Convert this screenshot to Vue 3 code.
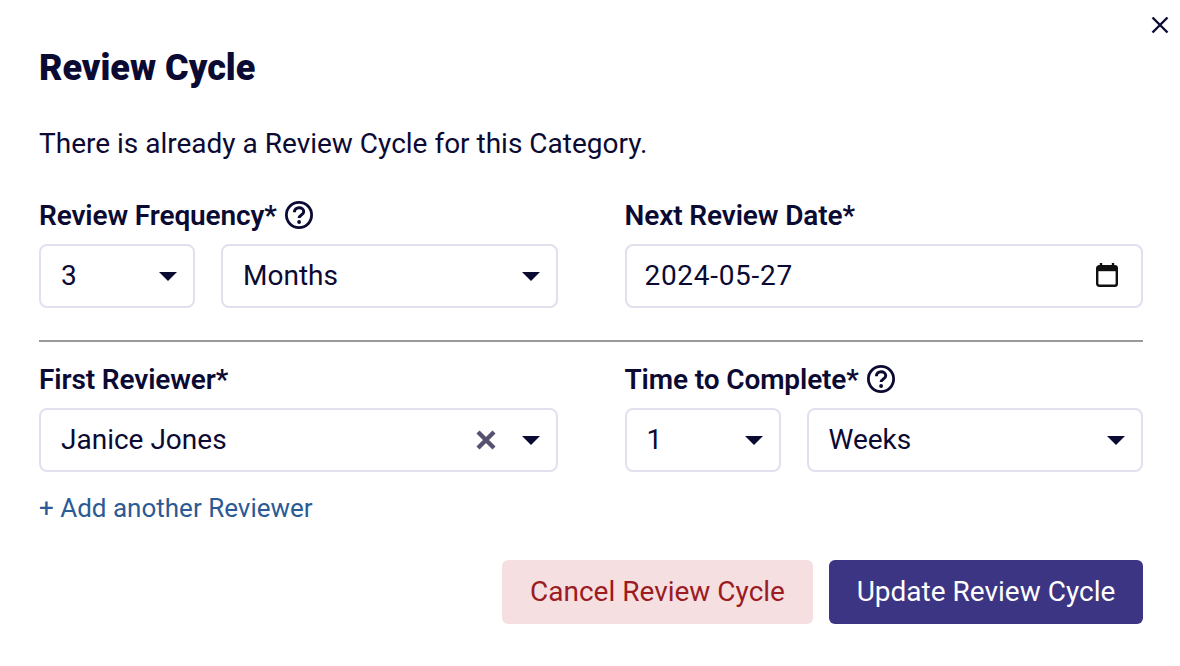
<script setup>
const caret = "M0 0h14L7 7z";
</script>

<template>
  <div class="dialog">
    <button class="close-btn" aria-label="Close">
      <svg width="18" height="18" viewBox="0 0 18 18"><path d="M1.5 1.5l15 15M16.5 1.5l-15 15" stroke="#0b0a33" stroke-width="2.4" fill="none" /></svg>
    </button>
    <h2 class="title">Review Cycle</h2>
    <p class="intro">There is already a Review Cycle for this Category.</p>

    <div class="row">
      <div class="field">
        <div class="label">
          Review Frequency*
          <svg class="help" width="30" height="30" viewBox="0 0 30 30">
            <circle cx="15" cy="15" r="12.6" fill="none" stroke="#0b0a33" stroke-width="2.8" />
            <path d="M10.4 12.2c0-2.7 2.1-4.4 4.7-4.4s4.6 1.6 4.6 3.9c0 3.3-4.6 3.2-4.6 6.4" fill="none" stroke="#0b0a33" stroke-width="3" />
            <circle cx="15.1" cy="22" r="1.9" fill="#0b0a33" />
          </svg>
        </div>
        <div class="pair">
          <div class="select small">
            <span>3</span>
            <svg class="caret" width="18" height="9" viewBox="0 0 14 7"><path :d="caret" /></svg>
          </div>
          <div class="select wide">
            <span>Months</span>
            <svg class="caret" width="18" height="9" viewBox="0 0 14 7"><path :d="caret" /></svg>
          </div>
        </div>
      </div>
      <div class="field">
        <div class="label">Next Review Date*</div>
        <div class="select date">
          <span class="date-value">2024-05-27</span>
          <svg class="calendar" width="24" height="26" viewBox="0 0 24 26">
            <path d="M6 1v4M18 1v4" stroke="#111" stroke-width="2.4" />
            <rect x="2.2" y="4.2" width="19.6" height="19.6" rx="2" fill="none" stroke="#111" stroke-width="2.4" />
            <rect x="2.2" y="4.2" width="19.6" height="5" fill="#111" />
          </svg>
        </div>
      </div>
    </div>

    <hr class="divider" />

    <div class="row">
      <div class="field">
        <div class="label">First Reviewer*</div>
        <div class="select">
          <span>Janice Jones</span>
          <div class="controls">
            <svg width="24" height="24" viewBox="0 0 24 24"><path d="M4 4l16 16M20 4L4 20" stroke="#55516e" stroke-width="4.4" fill="none" /></svg>
            <svg class="caret" width="18" height="9" viewBox="0 0 14 7"><path :d="caret" /></svg>
          </div>
        </div>
        <a class="add-link">+ Add another Reviewer</a>
      </div>
      <div class="field">
        <div class="label">
          Time to Complete*
          <svg class="help" width="30" height="30" viewBox="0 0 30 30">
            <circle cx="15" cy="15" r="12.6" fill="none" stroke="#0b0a33" stroke-width="2.8" />
            <path d="M10.4 12.2c0-2.7 2.1-4.4 4.7-4.4s4.6 1.6 4.6 3.9c0 3.3-4.6 3.2-4.6 6.4" fill="none" stroke="#0b0a33" stroke-width="3" />
            <circle cx="15.1" cy="22" r="1.9" fill="#0b0a33" />
          </svg>
        </div>
        <div class="pair">
          <div class="select small">
            <span>1</span>
            <svg class="caret" width="18" height="9" viewBox="0 0 14 7"><path :d="caret" /></svg>
          </div>
          <div class="select wide">
            <span>Weeks</span>
            <svg class="caret" width="18" height="9" viewBox="0 0 14 7"><path :d="caret" /></svg>
          </div>
        </div>
      </div>
    </div>

    <div class="actions">
      <button class="btn btn-cancel">Cancel Review Cycle</button>
      <button class="btn btn-update">Update Review Cycle</button>
    </div>
  </div>
</template>

<style scoped>
.dialog {
  position: relative;
  box-sizing: border-box;
  width: 1180px;
  height: 666px;
  padding: 46px 37px 0 39px;
  background-color: #fff;
  color: #0b0a33;
  font-family: Roboto, "Liberation Sans", sans-serif;
  font-size: 28px;
}

.close-btn {
  position: absolute;
  top: 16px;
  right: 11px;
  padding: 0;
  border: 0;
  background: none;
  line-height: 0;
}

.title {
  margin: 0;
  font-size: 36px;
  line-height: 44px;
  font-weight: 900;
}

.intro {
  margin: 36px 0 0;
  line-height: 36px;
}

.row {
  display: grid;
  grid-template-columns: 518.5px 518.5px;
  column-gap: 67px;
}

.intro + .row {
  margin-top: 36px;
}

.field {
  min-width: 0;
}

.label {
  display: flex;
  align-items: center;
  gap: 7px;
  height: 34px;
  margin-bottom: 12px;
  font-weight: 600;
  letter-spacing: -0.12px;
}

.pair {
  display: flex;
  gap: 26px;
}

.select {
  display: flex;
  align-items: center;
  justify-content: space-between;
  box-sizing: border-box;
  height: 64px;
  padding: 0 16px 0 20px;
  border: 2px solid #e0e0ee;
  border-radius: 8px;
}

.select span,
.calendar {
  margin-bottom: 2px;
}

.small {
  width: 156px;
}

.wide {
  flex: 1;
}

.date {
  padding-right: 22px;
  padding-left: 18px;
}

.date-value {
  letter-spacing: 0.7px;
}

.caret {
  fill: #0b0a33;
}

.controls {
  display: flex;
  align-items: center;
  gap: 24px;
}

.divider {
  height: 2px;
  margin: 32px 0 20px;
  border: 0;
  background-color: #999;
}

.add-link {
  display: block;
  margin-top: 18px;
  font-size: 26px;
  line-height: 36px;
  color: #2b5a95;
}

.actions {
  display: flex;
  justify-content: flex-end;
  gap: 16px;
  margin-top: 34px;
}

.btn {
  height: 64px;
  padding: 0 0 2px;
  border: 0;
  border-radius: 6px;
  font-family: inherit;
  font-size: 28px;
}

.btn-cancel {
  width: 311px;
  background-color: #f6dfe1;
  color: #9b1c22;
}

.btn-update {
  width: 314px;
  background-color: #3c3584;
  color: #fff;
}
</style>
